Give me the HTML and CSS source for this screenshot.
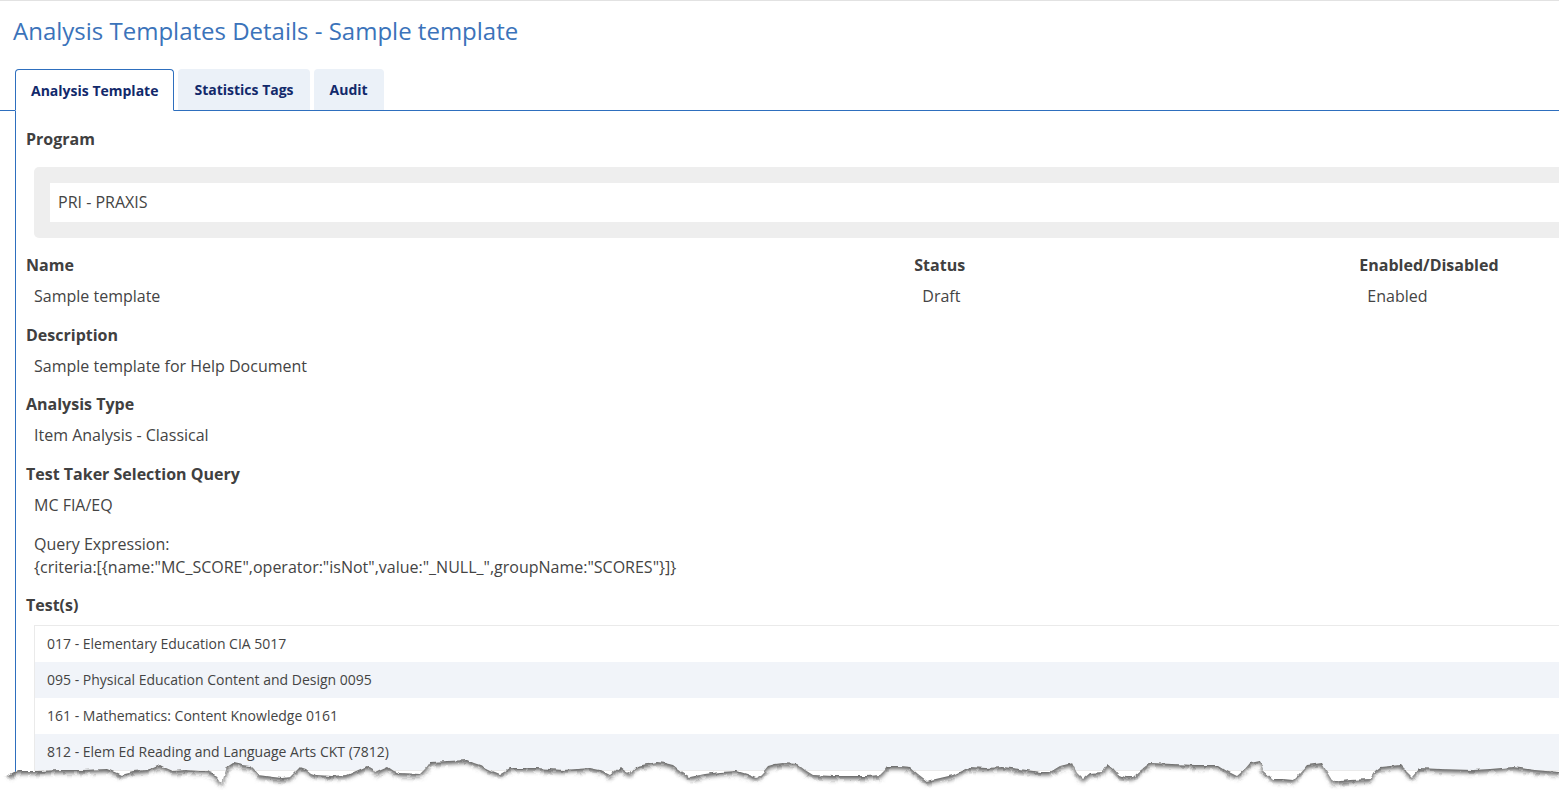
FILE: index.html
```html
<!doctype html>
<html lang="en">
  <head>
    <meta charset="UTF-8" />
    <meta name="viewport" content="width=device-width, initial-scale=1.0" />
    <title>Analysis Templates Details - Sample template</title>
    <link rel="stylesheet" href="styles.css">
  </head>
  <body>
    <h1 class="page-title">Analysis Templates Details - Sample template</h1>

    <div class="tabs">
      <div class="tab tab-active">Analysis Template</div>
      <div class="tab">Statistics Tags</div>
      <div class="tab">Audit</div>
    </div>

    <div class="panel">
      <div class="label">Program</div>
      <div class="select-box">
        <div class="select-value">PRI - PRAXIS</div>
      </div>

      <div class="field-row">
        <div>
          <div class="label">Name</div>
          <div class="value">Sample template</div>
        </div>
        <div>
          <div class="label">Status</div>
          <div class="value">Draft</div>
        </div>
        <div>
          <div class="label">Enabled/Disabled</div>
          <div class="value">Enabled</div>
        </div>
      </div>

      <div class="label">Description</div>
      <div class="value">Sample template for Help Document</div>

      <div class="label">Analysis Type</div>
      <div class="value">Item Analysis - Classical</div>

      <div class="label">Test Taker Selection Query</div>
      <div class="value">MC FIA/EQ</div>
      <div class="value value-query">Query Expression:<br />{criteria:[{name:"MC_SCORE",operator:"isNot",value:"_NULL_",groupName:"SCORES"}]}</div>

      <div class="label label-list">Test(s)</div>
      <ul class="test-list">
        <li>017 - Elementary Education CIA 5017</li>
        <li>095 - Physical Education Content and Design 0095</li>
        <li>161 - Mathematics: Content Knowledge 0161</li>
        <li>812 - Elem Ed Reading and Language Arts CKT (7812)</li>
      </ul>
    </div>

    <!-- torn paper edge over the bottom of the page -->
    <svg class="torn-edge" viewBox="0 0 1559 45" width="1559" height="45" aria-hidden="true">
      <defs>
        <path id="above" d="M8 31 L14 27 L20 26 L38 26 L60 25 L82 25 L107 24 L112 26 L117 28 L121 30 L125 28 L133 26 L146 25 L153 23 L160 20 L166 23 L173 26 L186 25 L200 26 L207 26 L213 28 L218 33 L222 39 L224 31 L227 22 L233 18 L242 20 L250 21 L254 25 L258 30 L273 32 L282 33 L290 32 L295 27 L300 22 L306 24 L311 28 L317 30 L332 31 L347 30 L356 26 L367 21 L372 24 L375 28 L381 25 L388 22 L394 26 L400 28 L420 29 L425 24 L430 17 L448 16 L467 15 L474 18 L480 20 L490 25 L500 29 L505 26 L510 23 L520 23 L537 23 L550 24 L563 25 L577 24 L590 23 L600 25 L610 30 L615 26 L620 22 L625 26 L630 29 L637 21 L647 19 L657 17 L665 18 L673 20 L682 27 L690 32 L705 29 L720 27 L737 26 L747 29 L757 33 L763 27 L768 21 L775 19 L783 18 L797 19 L805 25 L813 30 L833 31 L853 31 L867 31 L880 30 L885 25 L888 21 L900 21 L910 22 L918 29 L927 36 L940 33 L953 30 L961 26 L970 22 L985 23 L1003 22 L1020 24 L1040 27 L1050 27 L1055 24 L1060 21 L1072 18 L1077 28 L1083 34 L1090 28 L1103 27 L1108 19 L1113 23 L1118 29 L1125 32 L1133 32 L1141 25 L1150 18 L1173 19 L1195 20 L1217 20 L1227 26 L1237 31 L1244 25 L1250 18 L1260 16 L1263 25 L1273 34 L1283 34 L1293 35 L1300 28 L1307 20 L1322 18 L1327 27 L1333 37 L1350 35 L1370 34 L1375 26 L1380 22 L1400 20 L1406 26 L1412 32 L1420 23 L1440 24 L1473 25 L1490 24 L1513 22 L1535 25 L1559 27 L1570 27 L1570 -30 L8 -30 Z" />
        <path id="paper" d="M0 31 L7 31 L14 27 L20 26 L38 26 L60 25 L82 25 L107 24 L112 26 L117 28 L121 30 L125 28 L133 26 L146 25 L153 23 L160 20 L166 23 L173 26 L186 25 L200 26 L207 26 L213 28 L218 33 L222 39 L224 31 L227 22 L233 18 L242 20 L250 21 L254 25 L258 30 L273 32 L282 33 L290 32 L295 27 L300 22 L306 24 L311 28 L317 30 L332 31 L347 30 L356 26 L367 21 L372 24 L375 28 L381 25 L388 22 L394 26 L400 28 L420 29 L425 24 L430 17 L448 16 L467 15 L474 18 L480 20 L490 25 L500 29 L505 26 L510 23 L520 23 L537 23 L550 24 L563 25 L577 24 L590 23 L600 25 L610 30 L615 26 L620 22 L625 26 L630 29 L637 21 L647 19 L657 17 L665 18 L673 20 L682 27 L690 32 L705 29 L720 27 L737 26 L747 29 L757 33 L763 27 L768 21 L775 19 L783 18 L797 19 L805 25 L813 30 L833 31 L853 31 L867 31 L880 30 L885 25 L888 21 L900 21 L910 22 L918 29 L927 36 L940 33 L953 30 L961 26 L970 22 L985 23 L1003 22 L1020 24 L1040 27 L1050 27 L1055 24 L1060 21 L1072 18 L1077 28 L1083 34 L1090 28 L1103 27 L1108 19 L1113 23 L1118 29 L1125 32 L1133 32 L1141 25 L1150 18 L1173 19 L1195 20 L1217 20 L1227 26 L1237 31 L1244 25 L1250 18 L1260 16 L1263 25 L1273 34 L1283 34 L1293 35 L1300 28 L1307 20 L1322 18 L1327 27 L1333 37 L1350 35 L1370 34 L1375 26 L1380 22 L1400 20 L1406 26 L1412 32 L1420 23 L1440 24 L1473 25 L1490 24 L1513 22 L1535 25 L1559 27 L1570 27 L1570 60 L-10 60 L-10 31 Z" />
        <clipPath id="paper-clip"><use href="#paper" /></clipPath>
        <filter id="soft" x="-2%" y="-100%" width="104%" height="300%">
          <feGaussianBlur stdDeviation="2" />
        </filter>
        <filter id="rough" x="-2%" y="-100%" width="104%" height="300%">
          <feTurbulence type="fractalNoise" baseFrequency="0.12" numOctaves="2" seed="4" />
          <feDisplacementMap in="SourceGraphic" scale="4" xChannelSelector="R" yChannelSelector="G" />
        </filter>
      </defs>
      <g filter="url(#rough)">
        <use href="#paper" fill="#fff" />
        <g clip-path="url(#paper-clip)">
          <use href="#above" transform="translate(0 3)" fill="#5e5e5e" filter="url(#soft)" />
        </g>
      </g>
    </svg>
  </body>
</html>
```

FILE: styles.css
```css
html,
body {
  height: 100%;
}
body {
  position: relative;
  margin: 0;
  overflow: hidden;
  border-top: 1px solid #e2e2e2;
  box-sizing: border-box;
  background-color: #fff;
  font-family: "Open Sans", sans-serif;
  font-size: 16px;
  line-height: 22.857px;
  color: #444;
}
.page-title {
  margin: 0;
  padding: 13px 0 0 13px;
  height: 68px;
  box-sizing: border-box;
  font-size: 24px;
  line-height: 34px;
  font-weight: 400;
  color: #3b73ba;
}
.tabs {
  display: flex;
  align-items: flex-end;
  gap: 4px;
  padding-left: 15px;
  width: 1800px;
  height: 42px;
  box-sizing: border-box;
  border-bottom: 1px solid #2e6fbe;
}
.tab {
  height: 41px;
  padding: 0 16px;
  box-sizing: border-box;
  background-color: #ebf1f8;
  border-radius: 4px 4px 0 0;
  font-size: 14px;
  font-weight: 700;
  line-height: 41px;
  color: #12296b;
}
.tab-active {
  height: 42px;
  margin-bottom: -1px;
  padding: 0 15px;
  background-color: #fff;
  border: 1px solid #2e6fbe;
  border-bottom-color: #fff;
  line-height: 42px;
}
.panel {
  width: 1800px;
  min-height: 700px;
  margin-left: 15px;
  padding: 17px 0 0 10px;
  box-sizing: border-box;
  border-left: 1px solid #2e6fbe;
}
.label {
  font-weight: 700;
  color: #404040;
}
.value {
  padding: 8px 0 16px 8px;
}
.value-query {
  padding-top: 0;
  padding-bottom: 15.6px;
  white-space: nowrap;
}
.select-box {
  margin: 16px 0 16.15px 8px;
  padding: 16px;
  background-color: #eee;
  border-radius: 5px;
}
.select-value {
  height: 39px;
  padding-left: 8px;
  background-color: #fff;
  line-height: 38px;
}
.field-row {
  display: grid;
  grid-template-columns: 888.3px 445px 445px;
}
.label-list {
  margin-bottom: 8.4px;
}
.test-list {
  margin: 0 0 0 8px;
  padding: 0;
  list-style: none;
  border: 1px solid #eaeaea;
  font-size: 14px;
}
.test-list li {
  height: 36px;
  padding-left: 12px;
  line-height: 36px;
}
.test-list li:nth-child(even) {
  background-color: #f1f4f9;
}
.torn-edge {
  position: absolute;
  left: 0;
  bottom: 0;
  display: block;
}
```
